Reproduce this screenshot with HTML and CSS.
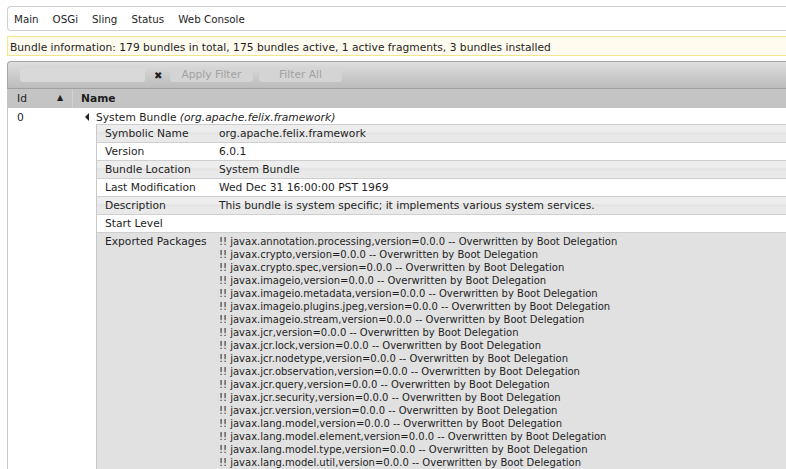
FILE: index.html
```html
<!DOCTYPE html>
<html>
<head>
<meta charset="utf-8">
<link rel="stylesheet" href="styles.css">
</head>
<body>
<div class="page">
  <div class="nav">
    <span class="nav-item">Main</span>
    <span class="nav-item">OSGi</span>
    <span class="nav-item">Sling</span>
    <span class="nav-item">Status</span>
    <span class="nav-item">Web Console</span>
  </div>
  <div class="info">Bundle information: 179 bundles in total, 175 bundles active, 1 active fragments, 3 bundles installed</div>
  <div class="grid">
    <div class="toolbar">
      <div class="filter-input"></div>
      <span class="clear">✖</span>
      <span class="btn btn-apply">Apply Filter</span>
      <span class="btn btn-all">Filter All</span>
    </div>
    <div class="head">
      <div class="col-id">Id <span class="sort">▲</span></div>
      <div class="col-name">Name</div>
    </div>
    <div class="body">
      <div class="id-cell">0</div>
      <div class="name-cell">
        <div class="bundle-title"><span class="tri"></span>System Bundle <i>(org.apache.felix.framework)</i></div>
        <div class="details">
          <div class="drow odd"><div class="dk">Symbolic Name</div><div class="dv">org.apache.felix.framework</div></div>
          <div class="drow"><div class="dk">Version</div><div class="dv">6.0.1</div></div>
          <div class="drow odd"><div class="dk">Bundle Location</div><div class="dv">System Bundle</div></div>
          <div class="drow"><div class="dk">Last Modification</div><div class="dv">Wed Dec 31 16:00:00 PST 1969</div></div>
          <div class="drow odd"><div class="dk">Description</div><div class="dv">This bundle is system specific; it implements various system services.</div></div>
          <div class="drow"><div class="dk">Start Level</div><div class="dv"></div></div>
          <div class="drow pkgs"><div class="dk">Exported Packages</div><div class="dv lines">
            <div>!! javax.annotation.processing,version=0.0.0 -- Overwritten by Boot Delegation</div>
            <div>!! javax.crypto,version=0.0.0 -- Overwritten by Boot Delegation</div>
            <div>!! javax.crypto.spec,version=0.0.0 -- Overwritten by Boot Delegation</div>
            <div>!! javax.imageio,version=0.0.0 -- Overwritten by Boot Delegation</div>
            <div>!! javax.imageio.metadata,version=0.0.0 -- Overwritten by Boot Delegation</div>
            <div>!! javax.imageio.plugins.jpeg,version=0.0.0 -- Overwritten by Boot Delegation</div>
            <div>!! javax.imageio.stream,version=0.0.0 -- Overwritten by Boot Delegation</div>
            <div>!! javax.jcr,version=0.0.0 -- Overwritten by Boot Delegation</div>
            <div>!! javax.jcr.lock,version=0.0.0 -- Overwritten by Boot Delegation</div>
            <div>!! javax.jcr.nodetype,version=0.0.0 -- Overwritten by Boot Delegation</div>
            <div>!! javax.jcr.observation,version=0.0.0 -- Overwritten by Boot Delegation</div>
            <div>!! javax.jcr.query,version=0.0.0 -- Overwritten by Boot Delegation</div>
            <div>!! javax.jcr.security,version=0.0.0 -- Overwritten by Boot Delegation</div>
            <div>!! javax.jcr.version,version=0.0.0 -- Overwritten by Boot Delegation</div>
            <div>!! javax.lang.model,version=0.0.0 -- Overwritten by Boot Delegation</div>
            <div>!! javax.lang.model.element,version=0.0.0 -- Overwritten by Boot Delegation</div>
            <div>!! javax.lang.model.type,version=0.0.0 -- Overwritten by Boot Delegation</div>
            <div>!! javax.lang.model.util,version=0.0.0 -- Overwritten by Boot Delegation</div>
          </div></div>
        </div>
      </div>
    </div>
  </div>
</div>
</body>
</html>
```

FILE: styles.css
```css
* {
  box-sizing: border-box;
}
html, body {
  margin: 0;
  padding: 0;
  overflow: hidden;
  height: 469px;
}
body {
  font-family: "DejaVu Sans", Verdana, sans-serif;
  font-size: 10.7px;
  color: #1e1e1e;
  background: #fff;
}
.page {
  padding: 6px 0 0 7px;
}
.nav {
  display: flex;
  align-items: center;
  height: 25px;
  border: 1px solid #cfcfcf;
  border-right: 0;
  border-radius: 4px 0 0 4px;
  padding: 1px 0 0 6px;
  gap: 14px;
  font-size: 10.3px;
}
.info {
  margin-top: 5px;
  height: 20px;
  line-height: 19px;
  padding-top: 1px;
  background: #fffbee;
  border: 1px solid #f3e58c;
  border-right: 0;
  padding-left: 2px;
}
.grid {
  margin-top: 5px;
}
.toolbar {
  height: 28px;
  border-top: 1px solid #a8a8a8;
  border-left: 1px solid #a8a8a8;
  border-bottom: 1px solid #a0a0a0;
  border-radius: 4px 0 0 0;
  background: linear-gradient(#dddddd, #bcbcbc);
  display: flex;
  align-items: center;
  padding-left: 12px;
}
.filter-input {
  width: 125px;
  height: 14px;
  background: #d9d9d9;
  border-radius: 3px;
}
.clear {
  margin-left: 9px;
  font-size: 10px;
  color: #222;
  width: 14px;
}
.btn {
  height: 14px;
  line-height: 14px;
  background: #d4d4d4;
  border-radius: 3px;
  color: #a2a2a2;
  text-align: center;
}
.btn-apply { width: 83px; margin-left: 2px; }
.btn-all { width: 83px; margin-left: 6px; }
.head {
  display: flex;
  height: 19px;
  line-height: 20px;
  background: #c4c4c4;
}
.col-id {
  width: 66px;
  padding-left: 10px;
  position: relative;
  flex: none;
  border-right: 1px solid #d2d2d2;
}
.sort {
  font-size: 8px;
  position: absolute;
  left: 50px;
  top: -1px;
}
.col-name {
  font-weight: bold;
  padding-left: 8px;
}
.body {
  display: flex;
  border-left: 1px solid #c8c8c8;
}
.id-cell {
  width: 65px;
  flex: none;
  padding: 4px 0 0 9px;
  line-height: 12px;
}
.name-cell {
  flex: 1;
  padding-top: 4px;
}
.bundle-title {
  padding-left: 12px;
  height: 12px;
  line-height: 12px;
}
.tri {
  display: inline-block;
  width: 0;
  height: 0;
  border-right: 4px solid #222;
  border-top: 4px solid transparent;
  border-bottom: 4px solid transparent;
  margin-right: 7px;
  vertical-align: 0;
}
.details {
  margin-left: 23px;
  border-left: 1px solid #c8c8c8;
  border-top: 1px solid #cccccc;
}
.drow {
  display: flex;
  height: 18px;
  line-height: 17px;
  border-bottom: 1px solid #cfcfcf;
  background: #fff;
}
.drow.odd {
  background: linear-gradient(#ededed 0, #ededed 40%, #e5e5e5 40%, #e5e5e5 60%, #e9e9e9 60%);
}
.dk {
  width: 122px;
  padding-left: 8px;
  flex: none;
}
.dv {
  flex: 1;
}
.drow.pkgs {
  height: auto;
  background: #e1e1e1;
  padding-top: 2px;
  line-height: 13px;
  border-bottom: 0;
}
.lines {
  font-size: 10px;
}
.lines div {
  line-height: 13px;
  height: 13px;
}
```
